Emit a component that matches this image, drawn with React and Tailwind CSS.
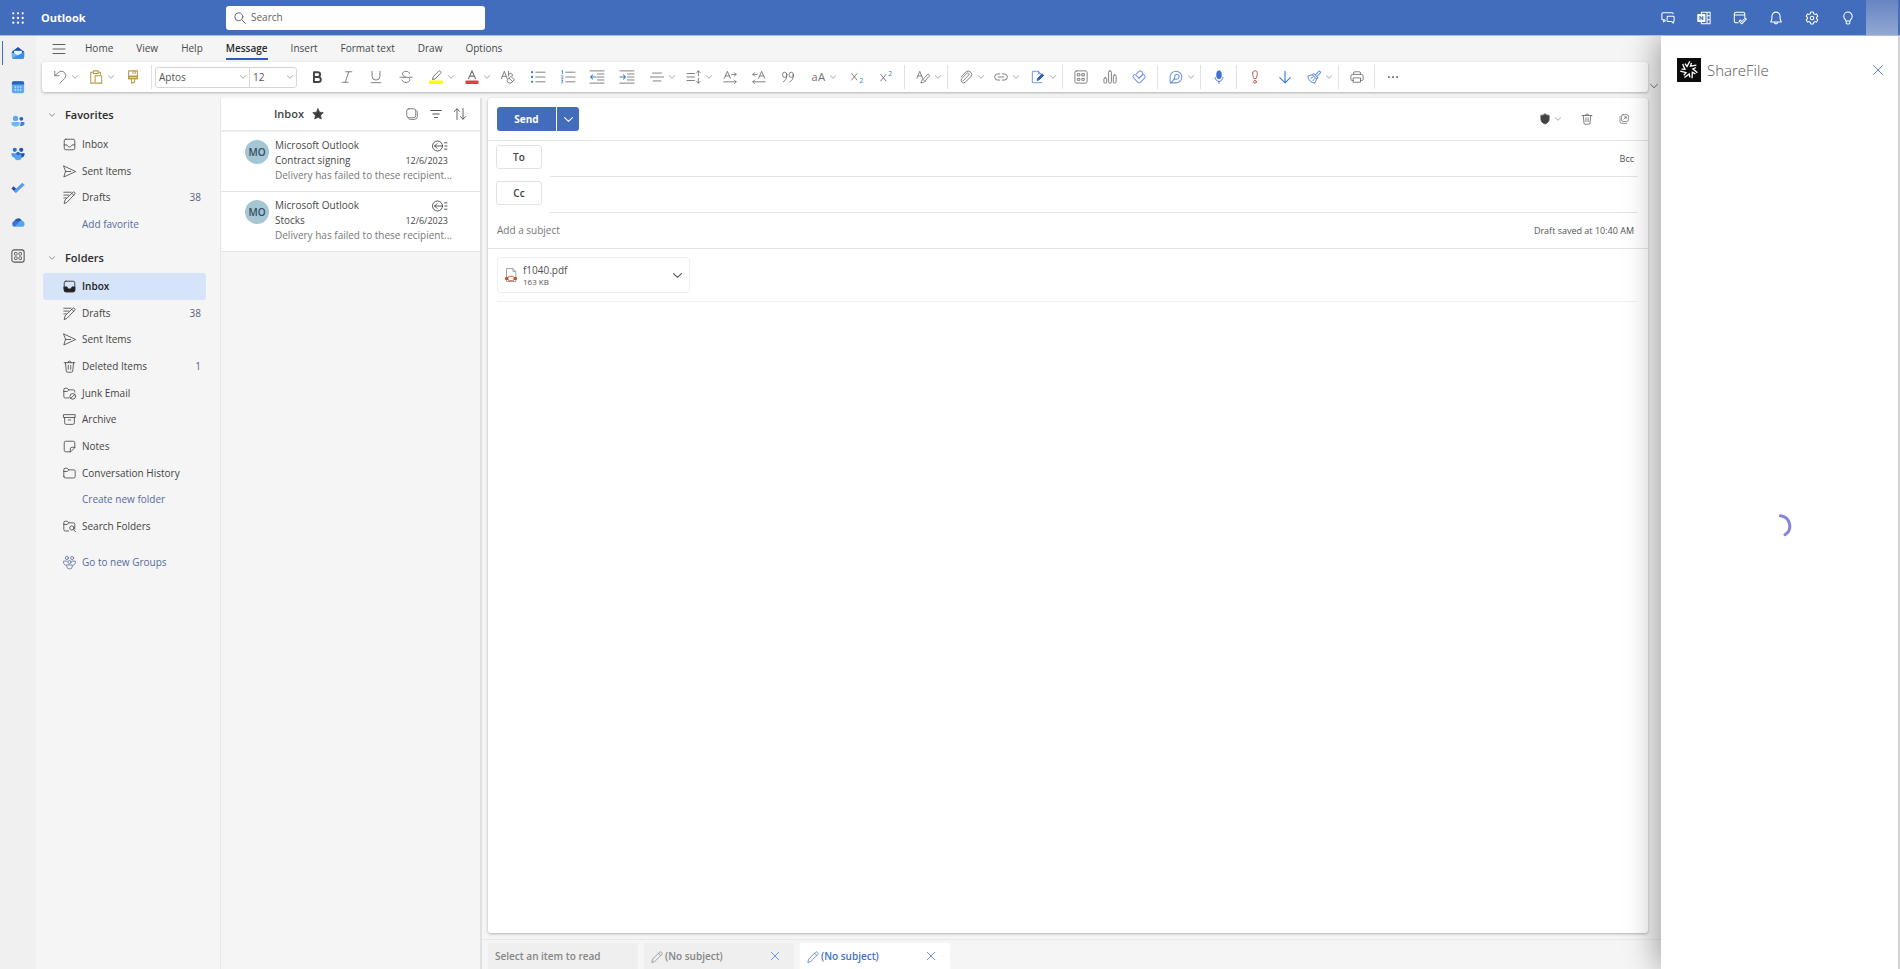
import React from "react";

function Icon({ className = "size-3.5", vb = 16, sw = 1, children, ...rest }) {
  return (
    <svg
      className={"shrink-0 overflow-visible " + className}
      viewBox={`0 0 ${vb} ${vb}`}
      fill="none"
      stroke="currentColor"
      strokeWidth={sw}
      strokeLinecap="round"
      strokeLinejoin="round"
      aria-hidden="true"
      {...rest}
    >
      {children}
    </svg>
  );
}

function Glyph({ x = 8, y = 12, size = 12, weight = 400, fill = "currentColor", children }) {
  return (
    <text x={x} y={y} fontSize={size} fontWeight={weight} fill={fill} stroke="none" textAnchor="middle">
      {children}
    </text>
  );
}

const Chevron = ({ className = "size-1.5 text-[#8a8a8a]" }) => (
  <Icon className={className} vb={8} sw={1}>
    <path d="M.5 2.300 4 5.700l3.500-3.400" />
  </Icon>
);

const Close = ({ className = "size-3" }) => (
  <Icon className={className} vb={12}>
    <path d="M1.500 1.500l9 9M10.500 1.500l-9 9" />
  </Icon>
);

const Pencil = () => (
  <Icon className="size-3">
    <path d="M1.200 14.800l1-4L11.300 1.700a1.800 1.800 0 0 1 2.600 0l.4.4a1.800 1.800 0 0 1 0 2.600L5.200 13.800z M10 3l3 3" />
  </Icon>
);

/* ---------- Header ---------- */

const headerTools = [
  ["Teams chat", <path d="M4 10H3v2.500L5 11M3 10H2.200A1.200 1.200 0 0 1 1 8.800V3.200A1.200 1.200 0 0 1 2.200 2h10.600A1.200 1.200 0 0 1 14 3.200M8 6h6a1 1 0 0 1 1 1v4a1 1 0 0 1-1 1v2l-2-2H8a1 1 0 0 1-1-1V7a1 1 0 0 1 1-1z" />],
  [
    "OneNote feed",
    <>
      <path d="M5 4V1.500h10v13H5V12M11.500 1.500v13M11.500 5.500H15M11.500 10H15" />
      <path d="M1 4h8v8H1z" fill="currentColor" />
      <path d="M3.400 10V6l3.200 4V6" stroke="#426dbc" />
    </>,
  ],
  ["My day", <path d="M6 13.500H3.500A2 2 0 0 1 1.500 11.500V3.500a2 2 0 0 1 2-2h8a2 2 0 0 1 2 2V7M1.500 4.500h12M7 11.500l1.400-1.200 1.600 1.700 4-4 1.300 1.300-5.300 5.300z" />],
  ["Notifications", <path d="M8 1.300a4.700 4.700 0 0 0-4.700 4.700v3.200L2 12.500h12l-1.300-3.300V6A4.700 4.700 0 0 0 8 1.300zM6 12.700a2 2 0 0 0 4 0" />],
  [
    "Settings",
    <>
      <path d="M6.500 1.200h3l.5 2 1.200.7 2-.6 1.500 2.600L13.200 7.300v1.400l1.500 1.400-1.500 2.600-2-.6-1.200.7-.5 2h-3l-.5-2-1.200-.7-2 .6-1.500-2.600 1.500-1.400V7.300L1.300 5.900l1.500-2.600 2 .6L6 3.200z" />
      <circle cx="8" cy="8" r="2" />
    </>,
  ],
  ["Tips", <path d="M5.700 11.500C5.500 9.800 3.200 9 3.200 6a4.800 4.800 0 0 1 9.600 0c0 3-2.300 3.800-2.500 5.500zM5.900 11.500v2a1.300 1.300 0 0 0 1.300 1.300h1.600a1.300 1.300 0 0 0 1.300-1.300v-2" />],
];

function Header() {
  return (
    <header className="relative z-20 flex h-9 shrink-0 items-center border-b border-[#a9bde2] bg-[#426dbc] text-white">
      <button aria-label="App launcher" className="flex w-9 justify-center">
        <svg className="size-3" viewBox="0 0 12 12" fill="currentColor" aria-hidden="true">
          {[1.3, 6, 10.7].map((y) => [1.3, 6, 10.7].map((x) => <circle key={x + "-" + y} cx={x} cy={y} r="1.150" />))}
        </svg>
      </button>
      <h1 className="w-[190px] pt-px pl-[5px] text-[11px] font-bold">Outlook</h1>
      <label className="flex h-6 w-[259px] items-center gap-[5px] rounded-[3px] bg-white px-2 text-[#5a5a5a]">
        <Icon className="size-3" vb={12} sw={0.9}>
          <circle cx="4.800" cy="4.800" r="4" />
          <path d="M7.800 7.800l3.600 3.600" />
        </Icon>
        <input aria-label="Search" placeholder="Search" className="w-full bg-transparent text-[10px] outline-none placeholder:text-[#616161]" />
      </label>
      <div className="ml-auto flex items-center">
        {headerTools.map(([name, art]) => (
          <button key={name} aria-label={name} className="flex w-9 justify-center">
            <Icon sw={1.2}>{art}</Icon>
          </button>
        ))}
        <button aria-label="Account" className="mr-0.5 h-[35px] w-8 bg-linear-to-b from-[#6785c2] to-[#93a8d3]" />
      </div>
    </header>
  );
}

/* ---------- App rail ---------- */

const railApps = [
  [
    "Mail",
    <>
      <path d="M1 6.500 8 1.200l7 5.300V12a2.500 2.500 0 0 1-2.500 2.500h-9A2.500 2.500 0 0 1 1 12z" fill="#1f4fae" />
      <path d="M3.500 5.500h9V11h-9z" fill="#e4f3fd" />
      <path d="M1 7.200l7 3.300 7-3.300v5a2.500 2.500 0 0 1-2.500 2.500h-9A2.500 2.500 0 0 1 1 12.200z" fill="#66b5f5" />
      <path d="M1.500 13.700 15 7.200v5a2.500 2.500 0 0 1-2.500 2.500h-9a2.500 2.500 0 0 1-2-1z" fill="#3d8ce8" />
    </>,
  ],
  [
    "Calendar",
    <>
      <rect x="1" y="1.500" width="14" height="13.500" rx="2" fill="#5ea9f2" />
      <path d="M1 5.200V3.500a2 2 0 0 1 2-2h10a2 2 0 0 1 2 2v1.700z" fill="#2c62bd" />
      {[[5, 8], [8, 8], [11, 8], [5, 11.3], [8, 11.3], [11, 11.3]].map(([x, y]) => (
        <circle key={x + "-" + y} cx={x} cy={y} r="0.900" fill="#d9ecff" />
      ))}
    </>,
  ],
  [
    "People",
    <>
      <circle cx="5.200" cy="5" r="3" fill="#5aa9f0" />
      <circle cx="11.800" cy="5.500" r="2.200" fill="#2a62bf" />
      <path d="M.5 10.700A1.500 1.500 0 0 1 2 9.200h6.500a1.500 1.500 0 0 1 1.500 1.500c0 2.400-1.900 3.800-4.700 3.800S.5 13.100.5 10.700z" fill="#6cb8f6" />
      <path d="M11 9.200h3a1.500 1.500 0 0 1 1.500 1.500c0 2-1.600 3-3.700 3-.7 0-1.200-.1-1.700-.3.600-.7.900-1.600.900-2.700z" fill="#3c7fd9" />
    </>,
  ],
  [
    "Groups",
    <>
      <circle cx="4.300" cy="3.200" r="2.400" fill="#2f6fd0" />
      <circle cx="11.700" cy="3.200" r="2.400" fill="#2257b5" />
      <path d="M.5 7h7v5A5 5 0 0 1 .5 8.500z" fill="#4c97ea" />
      <path d="M8.500 7h7v1.500a5 5 0 0 1-7 3.500z" fill="#1f50ac" />
      <path d="M4 8.500h8v2.700a4 4 0 0 1-8 0z" fill="#5aa4f2" />
      <circle cx="8" cy="7.500" r="2" fill="#2b66c8" />
    </>,
  ],
  [
    "To Do",
    <>
      <path d="M.5 8.500 3 6l5 5-2.500 2.500z" fill="#1d4aa8" />
      <path d="M3.300 11.200 12.800 2l2.700 2.700-10 9z" fill="#5a9cee" />
    </>,
  ],
  [
    "OneDrive",
    <>
      <path d="M3.500 8A4.700 4.700 0 0 1 12.400 6.500L9 12H3z" fill="#2456ad" />
      <path d="M4 6.800c2-.6 3.500.2 4.800 1.200L5 13H3.600A3.200 3.200 0 0 1 4 6.800z" fill="#3275d2" />
      <path d="M4.500 13 9 7.600A3.700 3.700 0 0 1 15.500 10 3 3 0 0 1 12.600 13.500H3.600A3.200 3.200 0 0 1 .7 11z" fill="#5aa2ee" />
    </>,
  ],
  [
    "More apps",
    <>
      <rect x="1" y="1" width="14" height="14" rx="2.500" stroke="#555" strokeWidth="1.200" fill="none" />
      {[[4, 4], [9, 4], [4, 9], [9, 9]].map(([x, y]) => (
        <rect key={x + "-" + y} x={x} y={y} width="3" height="3" rx="0.600" stroke="#555" strokeWidth="1" fill="none" />
      ))}
    </>,
  ],
];

function Rail() {
  return (
    <nav aria-label="Apps" className="grid h-[237px] w-9 shrink-0 auto-rows-fr">
      {railApps.map(([name, art], i) => (
        <button key={name} aria-label={name} className="relative flex items-center justify-center">
          {i === 0 && <span className="absolute top-[5px] left-0.5 h-6 w-px bg-[#426dbc]" />}
          <svg className="size-3.5" viewBox="0 0 16 16" aria-hidden="true">
            {art}
          </svg>
        </button>
      ))}
    </nav>
  );
}

/* ---------- Ribbon ---------- */

const tabs = ["Home", "View", "Help", "Message", "Insert", "Format text", "Draw", "Options"];

function Tabs() {
  return (
    <div className="flex h-[26px] items-center">
      <button aria-label="Toggle folder pane" className="ml-[15px] flex w-[22px] justify-start pl-0.5 text-[#606060]">
        <Icon className="size-3" vb={12}>
          <path d="M0 1.500h12M0 6h12M0 10.500h12" />
        </Icon>
      </button>
      <div role="tablist" className="flex gap-[23px] pl-3">
        {tabs.map((t) => (
          <button
            key={t}
            role="tab"
            aria-selected={t === "Message"}
            className={
              t === "Message"
                ? "border-b-2 border-[#2f5db5] text-[10px] leading-5 font-semibold text-[#2b2b2b]"
                : "border-b-2 border-transparent text-[10px] leading-5 text-[#484848]"
            }
          >
            {t}
          </button>
        ))}
      </div>
    </div>
  );
}

const Tool = ({ name, children, className = "w-[30px] text-[#707070]" }) => (
  <button aria-label={name} className={"flex h-full shrink-0 items-center justify-center " + className}>
    {children}
  </button>
);

const MenuTool = ({ name, children, className = "w-9 text-[#707070]" }) => (
  <button aria-label={name} className={"flex h-full shrink-0 items-center gap-[5px] pl-2 " + className}>
    {children}
    <Chevron />
  </button>
);

const Group = ({ className, children }) => <div className={"flex h-full shrink-0 " + className}>{children}</div>;

const Sep = () => (
  <span className="flex h-6 w-[7px] shrink-0 justify-center">
    <span className="w-px bg-[#e2e2e2]" />
  </span>
);

const BLUE = "#3b78d4";
const flexTool = "flex-1 text-[#707070]";

function Ribbon() {
  return (
    <div className="mr-[13px] ml-1.5 flex h-[30px] items-center overflow-hidden rounded-[3px] bg-white pl-[3px] shadow-[0_1px_3px_rgba(0,0,0,0.28)]">
      <MenuTool name="Undo">
        <Icon>
          <path d="M2 1.500v5h5M2.300 6.300 6 3a5 5 0 0 1 7.400.2 5 5 0 0 1-.2 6.600L8 15" />
        </Icon>
      </MenuTool>
      <MenuTool name="Paste" className="w-[37px] text-[#b89b3c]">
        <Icon sw={1.2}>
          <path d="M5 2.500H2v12.500h3.500M10.500 2.500h2.500V5M5 1h5.500v3H5zM7 6.500h7.500V15H7z" />
        </Icon>
      </MenuTool>
      <Tool name="Format painter" className="w-[30px] text-[#b89b3c]">
        <Icon sw={1.2}>
          <path d="M3 1h10v9H9.600v4L6.400 15v-5H3zM3 7h10M8 1v3M10.500 1v3" />
          <path d="M3 7.500h10V10H3z" fill="currentColor" fillOpacity=".5" />
        </Icon>
      </Tool>
      <Sep />
      <div className="flex h-[21px] shrink-0 items-center rounded-[3px] border border-[#d6d6d6] text-[#555]">
        <label className="flex h-full w-[94px] items-center border-r border-[#d6d6d6] pr-[3px] pl-[3px]">
          <select aria-label="Font" className="w-full appearance-none bg-transparent text-[10px] outline-none">
            <option>Aptos</option>
          </select>
          <Chevron />
        </label>
        <label className="flex h-full w-[46px] items-center pr-[3px] pl-[3px]">
          <select aria-label="Font size" className="w-full appearance-none bg-transparent text-[10px] outline-none">
            <option>12</option>
          </select>
          <Chevron />
        </label>
      </div>
      <Group className="ml-[5px] w-[119px]">
        <Tool name="Bold" className="flex-1 text-[#444]">
          <Icon sw={2.2}>
            <path d="M4.500 2.500h4.300a2.700 2.700 0 0 1 0 5.400H4.500zM4.500 7.900h5a2.900 2.900 0 0 1 0 5.800h-5z" />
          </Icon>
        </Tool>
        <Tool name="Italic" className={flexTool}>
          <Icon>
            <path d="M6.500 2h7M2.500 14h7M10 2 6 14" />
          </Icon>
        </Tool>
        <Tool name="Underline" className={flexTool}>
          <Icon>
            <path d="M3.500 1.500V7a4.500 4.500 0 0 0 9 0V1.500M2.500 14.500h11" />
          </Icon>
        </Tool>
        <Tool name="Strikethrough" className={flexTool}>
          <Icon>
            <path d="M12 4c-.4-1.600-1.900-2.500-4-2.500-2.300 0-4 1.200-4 3C4 6.200 5.300 7 7 7.500M1 8.300h14M11.500 9c.6.500.8 1.100.8 1.900 0 2-1.800 3.400-4.300 3.400-2.200 0-3.900-1-4.400-2.800" />
          </Icon>
        </Tool>
      </Group>
      <MenuTool name="Text highlight color">
        <Icon sw={1.1}>
          <rect x="0" y="12" width="16" height="4" rx="1" fill="#ffff00" stroke="none" />
          <path d="M4 10.500l.8-2.800L11 1.400a1.300 1.300 0 0 1 1.900 0l.4.400a1.300 1.300 0 0 1 0 1.900L7.200 9.900z" />
        </Icon>
      </MenuTool>
      <MenuTool name="Font color">
        <Icon>
          <rect x="0.500" y="12" width="15" height="4" rx="1" fill="#d64541" stroke="none" />
          <path d="M4 10 8 .8 12 10M5.400 7h5.200" strokeWidth="1.200" />
        </Icon>
      </MenuTool>
      <Tool name="Clear formatting">
        <Icon>
          <path d="M.5 10 3.800 1.500 7 10M1.600 7.200h4.400M8.500 1.500V7M8.600 5.500a2.300 2.300 0 0 1 4.500 1" />
          <path d="M7 11.500l4.300-4.200 4 3.700-3.800 3.900H9zM9.200 9.400l4 3.700" />
        </Icon>
      </Tool>
      <Group className="w-[119px]">
        <Tool name="Bullets" className={flexTool}>
          <Icon>
            <path d="M5.500 2.500H16M5.500 8H16M5.500 13.500H16" />
            {[2.5, 8, 13.5].map((y) => (
              <circle key={y} cx="1.200" cy={y} r="1.300" fill={BLUE} stroke="none" />
            ))}
          </Icon>
        </Tool>
        <Tool name="Numbering" className={flexTool}>
          <Icon>
            <path d="M5.500 2.500H16M5.500 8H16M5.500 13.500H16" />
            <path d="M.8 1.200l1-.7v3.600M.4 6.600c.8-.8 2.200-.2 1.700.8L.5 9.600h2M.5 11.600h1.700l-1 1.400c1.400 0 1.400 2.200-.7 1.900" stroke={BLUE} strokeWidth=".9" />
          </Icon>
        </Tool>
        <Tool name="Decrease indent" className={flexTool}>
          <Icon>
            <path d="M0 1h16M8.500 4.600H16M8.500 8H16M8.500 11.400H16M0 15h16" />
            <path d="M7 8H.8M3 5.700.7 8 3 10.300" stroke={BLUE} strokeWidth="1.200" />
          </Icon>
        </Tool>
        <Tool name="Increase indent" className={flexTool}>
          <Icon>
            <path d="M0 1h16M8.500 4.600H16M8.500 8H16M8.500 11.400H16M0 15h16" />
            <path d="M0 8h6.200M4 5.700 6.300 8 4 10.300" stroke={BLUE} strokeWidth="1.200" />
          </Icon>
        </Tool>
      </Group>
      <MenuTool name="Alignment" className="w-[37px] text-[#707070]">
        <Icon>
          <path d="M3 3.500h10M.5 8h15M3.500 12.500h9" />
        </Icon>
      </MenuTool>
      <MenuTool name="Line spacing">
        <Icon>
          <path d="M0 4h8.500M0 8h8.500M0 12h8.500M13 1v5.500M11 3l2-2 2 2M13 9.500V15M11 13l2 2 2-2" />
        </Icon>
      </MenuTool>
      <Group className="w-[88px]">
        <Tool name="Left to right" className={flexTool}>
          <Icon>
            <path d="M1.500 9.500 5 1.500l3.500 8M2.800 6.800h4.400M10 5h5M13 3l2 2-2 2M1 13.500h14M13 11.500l2 2-2 2" />
          </Icon>
        </Tool>
        <Tool name="Right to left" className={flexTool}>
          <Icon>
            <path d="M7.500 9.500l3.500-8 3.500 8M8.800 6.800h4.400M6 5H1M3 3 1 5l2 2M15 13.500H1M3 11.500l-2 2 2 2" />
          </Icon>
        </Tool>
        <Tool name="Quote" className={flexTool}>
          <Icon>
            <ellipse cx="4.200" cy="5.500" rx="2.500" ry="3" />
            <path d="M6.700 5.500c0 4-1.200 6.500-4 8" />
            <ellipse cx="11.700" cy="5.500" rx="2.500" ry="3" />
            <path d="M14.200 5.500c0 4-1.200 6.500-4 8" />
          </Icon>
        </Tool>
      </Group>
      <MenuTool name="Change case" className="w-[39px] text-[#707070]">
        <Icon>
          <Glyph x={4} y={12.5} size={12.5}>a</Glyph>
          <Glyph x={12} y={12.5} size={13}>A</Glyph>
        </Icon>
      </MenuTool>
      <Group className="w-[59px]">
        <Tool name="Subscript" className={flexTool}>
          <Icon>
            <path d="M2 4l6 7.500M8 4l-6 7.500" sw={1.2} />
            <Glyph x={13} y={15} size={8} fill={BLUE}>2</Glyph>
          </Icon>
        </Tool>
        <Tool name="Superscript" className={flexTool}>
          <Icon>
            <path d="M2 5l6 7.500M8 5l-6 7.500" />
            <Glyph x={13} y={6.5} size={8} fill={BLUE}>2</Glyph>
          </Icon>
        </Tool>
      </Group>
      <Sep />
      <MenuTool name="Styles">
        <Icon>
          <path d="M1 9.500 4.300 1.500 7.500 9.500M2.200 6.800h4.300" />
          <path d="M6 14.500c0-2 .5-3 2-3.700L13 5.200a1.400 1.400 0 0 1 2 2L10 13c-.8 1.300-2 1.700-4 1.500zM8 10.700l2 2" />
        </Icon>
      </MenuTool>
      <Sep />
      <MenuTool name="Attach file" className="w-[35px] text-[#707070]">
        <Icon>
          <path d="M4.500 12.500l6.700-6.700a1.500 1.500 0 0 0-2.100-2.100L3 9.800a3 3 0 0 0 4.200 4.200L13.500 7.700a3.900 3.900 0 0 0-5.500-5.500L2.500 7.700" />
        </Icon>
      </MenuTool>
      <MenuTool name="Link" className="w-[37px] text-[#707070]">
        <Icon>
          <path d="M6.500 4.500H4.200a3.500 3.500 0 0 0 0 7h2.300M9.500 4.500h2.300a3.500 3.500 0 0 1 0 7H9.500M4.800 8h6.400" />
        </Icon>
      </MenuTool>
      <MenuTool name="Signature" className="w-9 text-[#6b95df]">
        <Icon sw={1.1}>
          <path d="M11.500 4.500 8.500 1.500H1.500v13h11M8.500 1.500v3h3" />
          <path d="M7 11.500l.5-2L12.800 4.500l1.700 1.700-5.300 5z" fill="#2c5fc0" stroke="#2c5fc0" />
        </Icon>
      </MenuTool>
      <Sep />
      <Group className="w-[88px]">
        <Tool name="Apps" className={flexTool}>
          <Icon>
            <rect x="1" y="1" width="14" height="14" rx="2" />
            <path d="M4.200 4.200h2.500v2.500H4.200zM9.300 4.200h2.500v2.500H9.300zM4.200 9.600h2.500v2.200H4.200zM9.300 9.600h2.500v2.200H9.300z" />
          </Icon>
        </Tool>
        <Tool name="Poll" className={flexTool}>
          <Icon>
            <rect x="1" y="9" width="3.200" height="6" rx="1.500" />
            <rect x="6.400" y="1" width="3.200" height="14" rx="1.500" />
            <rect x="11.800" y="5.500" width="3.200" height="9.500" rx="1.500" />
          </Icon>
        </Tool>
        <Tool name="Loop components" className="flex-1 text-[#7d95ec]">
          <Icon sw={1.2}>
            <path d="M5 4.500 8 1.700a2 2 0 0 1 2.800 0l1 1a2 2 0 0 1 0 2.800L8 9.300 4.500 5.800a1.800 1.800 0 0 0-2.500 0l-.4.4a1.800 1.800 0 0 0 0 2.500l5 5.500a2 2 0 0 0 2.800 0l5-5a2 2 0 0 0 0-2.800L12.800 4.800" />
            <path d="M8 9.300l4-3.800" />
          </Icon>
        </Tool>
      </Group>
      <Sep />
      <MenuTool name="Editor" className="w-[36px] text-[#6b95df]">
        <Icon sw={1.2}>
          <path d="M1.300 14.700V7.500A6.700 6.700 0 1 1 8.500 14.700zM1.300 14.700c2-1 3.600-2.600 4.500-4.500" />
          <path d="M6.500 10.200c3.800 1 5-.8 5-2.700a2.400 2.400 0 0 0-4.900 0c0 1.300-.2 2.300-.8 3.500" />
        </Icon>
      </MenuTool>
      <Sep />
      <Tool name="Dictate" className="w-[29px] text-[#3f6fd0]">
        <Icon>
          <rect x="5.500" y="1" width="5" height="9" rx="2.500" fill="currentColor" />
          <path d="M3.500 8.500a4.500 4.500 0 0 0 9 0M8 13v2.500" />
        </Icon>
      </Tool>
      <Sep />
      <Tool name="High importance" className="w-[30px] text-[#b8504f]">
        <Icon>
          <path d="M5.300 3.500a2.700 2.700 0 0 1 5.400 0c0 2.500-.7 4.500-1.400 6.300H6.700C6 8 5.300 6 5.300 3.500z" />
          <circle cx="8" cy="13.500" r="1.600" />
        </Icon>
      </Tool>
      <Tool name="Low importance" className="w-[29px] text-[#3f78dc]">
        <Icon sw={1.3}>
          <path d="M8 1.500v13M2 8.700l6 6 6-6" />
        </Icon>
      </Tool>
      <MenuTool name="Sensitivity" className="w-9 text-[#6b95df]">
        <Icon sw={1.2}>
          <path d="M9.500 5.500l3.700-3.700a1.300 1.300 0 0 1 1.900 1.900l-3.700 3.700M7.500 4l5 5M7.500 4 6 5.500 11 10.500 12.500 9M6 5.500 1 6.800c.5 4 3.500 7.400 7.700 8.200L11 10.500M4.500 9.500l1.700-1.200M6.800 12l1.500-1.700" />
        </Icon>
      </MenuTool>
      <Sep />
      <Tool name="Print" className="w-[29px] text-[#707070]">
        <Icon>
          <path d="M4 5V3.500A1.500 1.500 0 0 1 5.500 2h5A1.500 1.500 0 0 1 12 3.500V5M4 12H2.500A1.500 1.500 0 0 1 1 10.500V7a2 2 0 0 1 2-2h10a2 2 0 0 1 2 2v3.500a1.500 1.500 0 0 1-1.500 1.500H12M4 9h8v5H4z" />
        </Icon>
      </Tool>
      <Sep />
      <Tool name="More options" className="w-[30px] text-[#333]">
        <Icon>
          {[3.3, 8, 12.7].map((x) => (
            <circle key={x} cx={x} cy="8" r="1" fill="currentColor" stroke="none" />
          ))}
        </Icon>
      </Tool>
    </div>
  );
}

/* ---------- Folder pane ---------- */

const folderArt = {
  inbox: <path d="M3.500 1.500h9a2 2 0 0 1 2 2v9a2 2 0 0 1-2 2h-9a2 2 0 0 1-2-2v-9a2 2 0 0 1 2-2zM1.500 8.500H5c.3 1.500 1.500 2.500 3 2.500s2.700-1 3-2.500h3.500" />,
  inboxFill: (
    <>
      <rect x="1.500" y="1.500" width="13" height="13" rx="2" />
      <path d="M1.500 8.500H5c.3 1.500 1.500 2.500 3 2.500s2.700-1 3-2.500h3.500v4a2 2 0 0 1-2 2h-9a2 2 0 0 1-2-2z" fill="currentColor" />
    </>
  ),
  sent: <path d="M1 1.200 15.500 8 1 14.800 3 8zM3 8h6.500" />,
  drafts: <path d="M1 1.500h9M1 5h6M1 8.500h3M1.500 15l1-4L12 1.700a1.600 1.600 0 0 1 2.300 0 1.600 1.600 0 0 1 0 2.300L5 13.800z M11 3l2.200 2.200" />,
  trash: <path d="M1.500 3.300h13M3 3.300l1 10.200A1.600 1.600 0 0 0 5.600 15h4.800a1.600 1.600 0 0 0 1.600-1.500l1-10.200M6 3.300a2 2 0 0 1 4 0M6.500 6.500v5M9.500 6.500v5" />,
  junk: (
    <>
      <path d="M7.500 13.500H2.800A1.800 1.800 0 0 1 1 11.700V3.300a1.800 1.800 0 0 1 1.800-1.800h2.400L7.200 3.500h5.500a1.800 1.800 0 0 1 1.800 1.800v1M1 5.500h4L7.200 3.500" />
      <circle cx="12" cy="11.500" r="3.500" />
      <path d="M9.700 13.900l4.700-4.700" />
    </>
  ),
  archive: <path d="M1 2h14v3.500H1zM2 5.500V12a2 2 0 0 0 2 2h8a2 2 0 0 0 2-2V5.500M6.500 8.500h3" />,
  notes: <path d="M9 14.500H3.500a2 2 0 0 1-2-2v-9a2 2 0 0 1 2-2h9a2 2 0 0 1 2 2V9zM9 14.500V11a2 2 0 0 1 2-2h3.500" />,
  folder: <path d="M1 11.700V3.300a1.800 1.800 0 0 1 1.800-1.800h2.400L7.200 3.500h6a1.800 1.800 0 0 1 1.800 1.800v6.400a1.800 1.800 0 0 1-1.800 1.800H2.800A1.800 1.800 0 0 1 1 11.700zM1 5.500h4L7.200 3.500" />,
  search: (
    <>
      <path d="M7 13.500H2.800A1.800 1.800 0 0 1 1 11.700V3.300a1.800 1.800 0 0 1 1.800-1.800h2.400L7.200 3.500h5.500a1.800 1.800 0 0 1 1.800 1.800v6M1 5.500h4L7.200 3.500" />
      <circle cx="10.800" cy="9.800" r="2.600" />
      <path d="M12.700 11.700l2.800 2.800" />
    </>
  ),
  groups: (
    <>
      <circle cx="4.800" cy="2.500" r="1.900" />
      <circle cx="11.200" cy="2.500" r="1.900" />
      <circle cx="8" cy="7.500" r="1.900" />
      <path d="M4.500 11h7v1.500a3.500 3.500 0 0 1-7 0zM5 6.300H.8c-.5 2.700.5 4.300 2.200 5M11 6.300h4.200c.5 2.700-.5 4.300-2.200 5" />
    </>
  ),
};

function FolderRow({ icon, label, count, active, link }) {
  return (
    <a
      href="#folder"
      className={
        "flex items-center rounded-[3px] pr-[5px] pl-5 text-[10px] " +
        (active ? "bg-[#d5e4f9] font-semibold text-[#222]" : link ? "text-[#566c9f]" : "text-[#444]")
      }
    >
      <span className="w-[19px] shrink-0">{icon && <Icon className="size-[13px]">{folderArt[icon]}</Icon>}</span>
      <span className="whitespace-nowrap">{label}</span>
      {count && <span className="ml-auto font-normal text-[#5a5f80]">{count}</span>}
    </a>
  );
}

const Section = ({ children }) => (
  <h2>
    <button className="flex h-8 items-center gap-2.5 pl-[6px] text-[11px] font-semibold text-[#2b2b2b]">
      <Chevron className="size-1.5 text-[#707070]" />
      {children}
    </button>
  </h2>
);

function FolderPane() {
  return (
    <nav aria-label="Folders" className="w-[185px] shrink-0 border-r border-[#e8e8e8] pt-px pr-[14px] pl-[7px]">
      <Section>Favorites</Section>
      <div className="grid h-[107px] auto-rows-fr">
        <FolderRow icon="inbox" label="Inbox" />
        <FolderRow icon="sent" label="Sent Items" />
        <FolderRow icon="drafts" label="Drafts" count="38" />
        <FolderRow label="Add favorite" link />
      </div>
      <div className="pt-1">
        <Section>Folders</Section>
      </div>
      <div className="-mt-px grid h-[267px] auto-rows-fr">
        <FolderRow icon="inboxFill" label="Inbox" active />
        <FolderRow icon="drafts" label="Drafts" count="38" />
        <FolderRow icon="sent" label="Sent Items" />
        <FolderRow icon="trash" label="Deleted Items" count="1" />
        <FolderRow icon="junk" label="Junk Email" />
        <FolderRow icon="archive" label="Archive" />
        <FolderRow icon="notes" label="Notes" />
        <FolderRow icon="folder" label="Conversation History" />
        <FolderRow label="Create new folder" link />
        <FolderRow icon="search" label="Search Folders" />
      </div>
      <div className="mt-[9px] grid h-[27px]">
        <FolderRow icon="groups" label="Go to new Groups" link />
      </div>
    </nav>
  );
}

/* ---------- Message list ---------- */

function MessageItem({ subject }) {
  return (
    <li className="flex h-[60px] gap-1.5 border-b border-[#e4e4e4] bg-white pt-[6px] pr-8 pl-6">
      <span className="mt-[2px] flex size-6 shrink-0 items-center justify-center rounded-full bg-[#a5c6d4] text-[10px] font-semibold text-[#2f4f5f]">MO</span>
      <div className="min-w-0 flex-1 text-[10px] leading-[15px] text-[#484848]">
        <div className="flex items-center justify-between">
          <span>Microsoft Outlook</span>
          <svg className="h-3 w-4" viewBox="0 0 16 12" fill="none" stroke="currentColor" strokeWidth="0.900" strokeLinecap="round" aria-hidden="true">
            <circle cx="5.500" cy="6" r="5" />
            <path d="M10 6H2.700M5 3.600 2.600 6 5 8.400M12.500 2.800H15M13 6h2M12.500 9.200H15" />
          </svg>
        </div>
        <div className="flex justify-between">
          <span>{subject}</span>
          <span className="text-[9px]">12/6/2023</span>
        </div>
        <div className="whitespace-nowrap text-[#777]">Delivery has failed to these recipient...</div>
      </div>
    </li>
  );
}

function MessageList() {
  return (
    <section aria-label="Message list" className="w-[261px] shrink-0 border-r-2 border-[#e0e0e0]">
      <header className="flex h-[34px] items-center border-b-2 border-[#ebebeb] bg-white pr-[14px] pl-[53px] text-[#555]">
        <h2 className="pt-px text-[11px] font-semibold text-[#444]">Inbox</h2>
        <button aria-label="Favorite" className="ml-2 text-[#3d3d3d]">
          <Icon className="size-3">
            <path d="M8 1l2.100 4.600 4.900.6-3.600 3.400.9 5L8 12.200l-4.300 2.400.9-5L1 6.200l4.900-.6z" fill="currentColor" />
          </Icon>
        </button>
        <div className="ml-auto flex items-center gap-3">
          <button aria-label="Select">
            <Icon className="size-3">
              <rect x="1" y="1" width="12" height="12" rx="3" />
              <path d="M3.500 14.500c.6.500 1.500.7 2.500.7h5a4.200 4.200 0 0 0 4.200-4.200V6c0-1-.2-1.900-.7-2.500" />
            </Icon>
          </button>
          <button aria-label="Filter">
            <Icon className="size-3" vb={12} sw={1.1}>
              <path d="M.8 2.500h10.400M2.800 6h6.400M4.500 9.500h3" />
            </Icon>
          </button>
          <button aria-label="Sort">
            <Icon className="size-3" vb={12} sw={0.9}>
              <path d="M3 11.500V.8M.3 3.500 3 .8l2.700 2.700M9 .5v10.700M6.300 8.500 9 11.200l2.700-2.700" />
            </Icon>
          </button>
        </div>
      </header>
      <ul>
        <MessageItem subject="Contract signing" />
        <MessageItem subject="Stocks" />
      </ul>
    </section>
  );
}

/* ---------- Compose ---------- */

function Recipient({ label, trailing }) {
  return (
    <div className="flex h-9 shrink-0 items-stretch pl-2">
      <button type="button" className="mt-1 h-6 w-[46px] shrink-0 rounded-[3px] border border-[#e2e2e2] text-[10px] font-semibold text-[#444]">{label}</button>
      <div className="mr-2.5 ml-2 flex flex-1 items-center border-b border-[#e4e4e4]">
        <input aria-label={label} className="min-w-0 flex-1 bg-transparent text-[10px] outline-none" />
        {trailing}
      </div>
    </div>
  );
}

function Compose() {
  return (
    <form className="mr-[13px] ml-1.5 flex min-h-0 flex-1 flex-col rounded-[3px] bg-white text-[#555] shadow-[0_1px_3px_rgba(0,0,0,0.28)]">
      <div className="flex h-[43px] shrink-0 items-center border-b border-[#e4e4e4] pr-4 pl-[9px]">
        <div className="flex h-6 overflow-hidden rounded-[3px] bg-[#426dbc] text-white">
          <button type="button" className="w-[60px] border-r border-white text-[10px] font-bold">Send</button>
          <button type="button" aria-label="Send options" className="flex w-[22px] items-center justify-center">
            <Chevron className="size-[9px]" />
          </button>
        </div>
        <div className="ml-auto flex items-center pr-[3px]">
          <button type="button" aria-label="Encrypt" className="mr-5 flex items-center gap-1 text-[#444]">
            <Icon className="size-3">
              <path d="M8 1.500c1.800 1.200 3.500 1.600 5.500 1.700V8c0 3.500-2.500 5.500-5.500 6.700C5 13.500 2.500 11.500 2.500 8V3.200C4.500 3.100 6.200 2.700 8 1.500z" fill="currentColor" />
            </Icon>
            <Chevron />
          </button>
          <button type="button" aria-label="Discard" className="mr-[26px]">
            <Icon className="size-3">{folderArt.trash}</Icon>
          </button>
          <button type="button" aria-label="Pop out">
            <Icon className="size-2.5">
              <rect x="4" y="1" width="11" height="11" rx="2.500" />
              <path d="M1.500 4v8a3 3 0 0 0 3 3h7.500M7.500 8.500l4-4M8.500 4.500h3v3" />
            </Icon>
          </button>
        </div>
      </div>
      <Recipient label="To" trailing={<button type="button" className="pr-1 text-[9px]">Bcc</button>} />
      <Recipient label="Cc" />
      <div className="flex h-9 shrink-0 items-center border-b border-[#e4e4e4] pr-3.5 pl-[9px]">
        <input aria-label="Add a subject" placeholder="Add a subject" className="flex-1 bg-transparent text-[10px] outline-none placeholder:text-[#777]" />
        <span className="text-[9px]">Draft saved at 10:40 AM</span>
      </div>
      <div className="mr-2.5 ml-[9px] border-b border-[#f0f0f0] py-2">
        <div className="flex h-9 w-[193px] items-center gap-1.5 rounded-[3px] border border-[#efefef] pr-[7px] pl-[7px]">
          <svg className="h-3.5 w-3" viewBox="0 0 12 14" fill="none" aria-hidden="true">
            <path d="M1.500.6H8L10.800 3.500v10H1.500zM8 .6v3h2.800" stroke="#9a9a9a" strokeWidth=".9" />
            <rect x="0" y="9" width="12" height="3" rx="1" fill="#c9502b" />
            <rect x="3" y="8.300" width="6" height="4.400" rx="1.500" fill="#fff" stroke="#c9502b" strokeWidth=".9" />
          </svg>
          <div>
            <div className="text-[10px] leading-[14px] text-[#505050]">f1040.pdf</div>
            <div className="text-[8px] leading-[10px]">163 KB</div>
          </div>
          <button type="button" aria-label="Attachment options" className="ml-auto">
            <Chevron className="size-[9px] text-[#555]" />
          </button>
        </div>
      </div>
      <textarea aria-label="Message body" className="min-h-0 flex-1 resize-none bg-transparent p-2 text-[10px] outline-none" />
    </form>
  );
}

function DraftTab({ active }) {
  return (
    <div
      className={
        "flex h-full w-[150px] items-center pl-[7px] text-[10px] font-semibold " +
        (active ? "bg-white text-[#4272c8]" : "bg-[#efefef] text-[#858585]")
      }
    >
      <button className="flex items-center gap-0.5 pt-px">
        <Pencil />
        (No subject)
      </button>
      <button aria-label="Close draft" className="mr-3.5 ml-auto text-[#5a86d6]">
        <Close className="size-2.5" />
      </button>
    </div>
  );
}

function ReadingPane() {
  return (
    <main className="flex min-w-0 flex-1 flex-col">
      <Compose />
      <div className="mt-[6px] flex h-[30px] shrink-0 gap-1.5 border-t border-[#e8e8e8] pt-[3px] pl-1.5">
        <button className="w-[150px] bg-[#efefef] pt-px pl-[7px] text-left text-[10px] font-semibold text-[#858585]">Select an item to read</button>
        <DraftTab />
        <DraftTab active />
      </div>
    </main>
  );
}

/* ---------- Add-in panel ---------- */

function AddInPanel() {
  return (
    <aside aria-label="ShareFile" className="relative z-10 flex w-[239px] shrink-0 flex-col border-r-2 border-[#d0d0d0] bg-white shadow-[-4px_0_30px_rgba(0,0,0,0.35)]">
      <div className="flex items-center gap-1.5 pt-[21px] pr-3.5 pl-4">
        <svg className="size-6" viewBox="0 0 24 24" aria-hidden="true">
          <rect width="24" height="24" fill="#0b0b0b" />
          {[0, 1, 2, 3, 4, 5, 6].map((k) => (
            <path
              key={k}
              d="M8 5.700 10 8.500 12.800 3.200"
              transform={`rotate(${(k * 360) / 7} 12 12)`}
              stroke="#fff"
              strokeWidth="1.300"
              fill="none"
            />
          ))}
        </svg>
        <h2 className="pt-px text-[15px] leading-6 font-light text-[#555]">ShareFile</h2>
        <button aria-label="Close panel" className="ml-auto text-[#5a86d6]">
          <Close />
        </button>
      </div>
      <div className="flex flex-1 items-center justify-center" role="status" aria-label="Loading">
        <svg className="size-6" viewBox="0 0 24 24" fill="none" aria-hidden="true">
          <path d="M12.500 1.800A10.300 10.300 0 0 1 17 20.700" stroke="#8585dd" strokeWidth="3" strokeLinecap="round" />
        </svg>
      </div>
    </aside>
  );
}

export default function App() {
  return (
    <div className="flex h-screen flex-col overflow-hidden bg-[#f5f5f5] font-['Open_Sans','Noto_Sans',sans-serif]">
      <Header />
      <div className="flex min-h-0 flex-1">
        <div className="shrink-0 bg-[#f0f0f0]">
          <Rail />
        </div>
        <div className="flex min-w-0 flex-1 flex-col">
          <Tabs />
          <div className="relative">
            <Ribbon />
            <button aria-label="Ribbon options" className="absolute right-[3px] bottom-0.5">
              <Chevron className="size-2 text-[#707070]" />
            </button>
          </div>
          <div className="flex min-h-0 flex-1 pt-1.5">
            <FolderPane />
            <MessageList />
            <ReadingPane />
          </div>
        </div>
        <AddInPanel />
      </div>
    </div>
  );
}
